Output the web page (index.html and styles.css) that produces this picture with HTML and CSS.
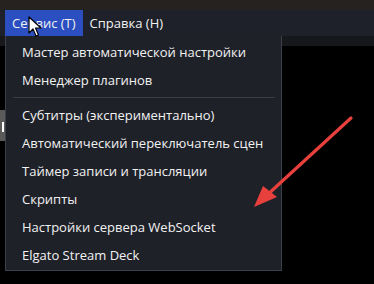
FILE: index.html
```html
<!DOCTYPE html>
<html>
<head>
    <title>Сервис</title>
    <link rel="stylesheet" href="styles.css">
</head>
<body>
    <div class="titlebar"></div>
    <div class="menubar">
        <div class="menu-item active">Сервис (T)</div>
        <div class="menu-item">Справка (H)</div>
    </div>
    <div class="toolbar"></div>
    <div class="workspace">
        <div class="side-tab"><span></span></div>
    </div>

    <div class="dropdown">
        <div class="entry">Мастер автоматической настройки</div>
        <div class="entry">Менеджер плагинов</div>
        <div class="separator"></div>
        <div class="entry">Субтитры (экспериментально)</div>
        <div class="entry">Автоматический переключатель сцен</div>
        <div class="entry">Таймер записи и трансляции</div>
        <div class="entry">Скрипты</div>
        <div class="entry">Настройки сервера WebSocket</div>
        <div class="entry">Elgato Stream Deck</div>
    </div>

    <svg class="cursor" width="14" height="22" viewBox="0 0 14 22">
        <path d="M1 1 L1 17 L5 13 L8 20 L10.5 19 L7.5 12 L13 12 Z" fill="#fff" stroke="#000" stroke-width="1.2" stroke-linejoin="round"/>
    </svg>

    <svg class="arrow" width="374" height="284" viewBox="0 0 374 284">
        <line x1="351" y1="118" x2="266" y2="196" stroke="#e8403c" stroke-width="3.2" stroke-linecap="round"/>
        <polygon points="254,207 263,186 277,197" fill="#e8403c"/>
    </svg>
</body>
</html>
```

FILE: styles.css
```css
body {
    margin: 0;
    width: 374px;
    height: 284px;
    background-color: #000;
    font-family: "Open Sans", "Noto Sans", sans-serif;
    font-size: 13px;
    color: #f2f2f2;
    overflow: hidden;
    position: relative;
}

.titlebar {
    height: 10px;
    background-color: #26221f;
}

.menubar {
    height: 26px;
    background-color: #1f212a;
    display: flex;
    padding-left: 5px;
}

.menu-item {
    padding: 0 7px;
    line-height: 26px;
    white-space: nowrap;
}

.menu-item.active {
    background-color: #2b4fc0;
}

.toolbar {
    height: 10px;
    background-color: #17181c;
}

.workspace {
    height: 238px;
    background-color: #000;
    padding-top: 64px;
    box-sizing: border-box;
}

.side-tab {
    width: 5px;
    height: 31px;
    background-color: #5a5a5a;
    padding-top: 12px;
    box-sizing: border-box;
}

.side-tab span {
    display: block;
    margin-left: 2px;
    width: 2px;
    height: 10px;
    background-color: #fff;
}

.dropdown {
    position: absolute;
    left: 5px;
    top: 36px;
    width: 275px;
    padding: 2px 0 1px;
    background-color: #1f2129;
    border: 1px solid #3d3f4a;
    border-top: none;
}

.entry {
    height: 28px;
    line-height: 28px;
    padding-left: 16px;
    white-space: nowrap;
}

.separator {
    height: 1px;
    margin: 3px 6px 3px 7px;
    background-color: #3a3c46;
}

.cursor {
    position: absolute;
    left: 28px;
    top: 16px;
}

.arrow {
    position: absolute;
    left: 0;
    top: 0;
}
```
